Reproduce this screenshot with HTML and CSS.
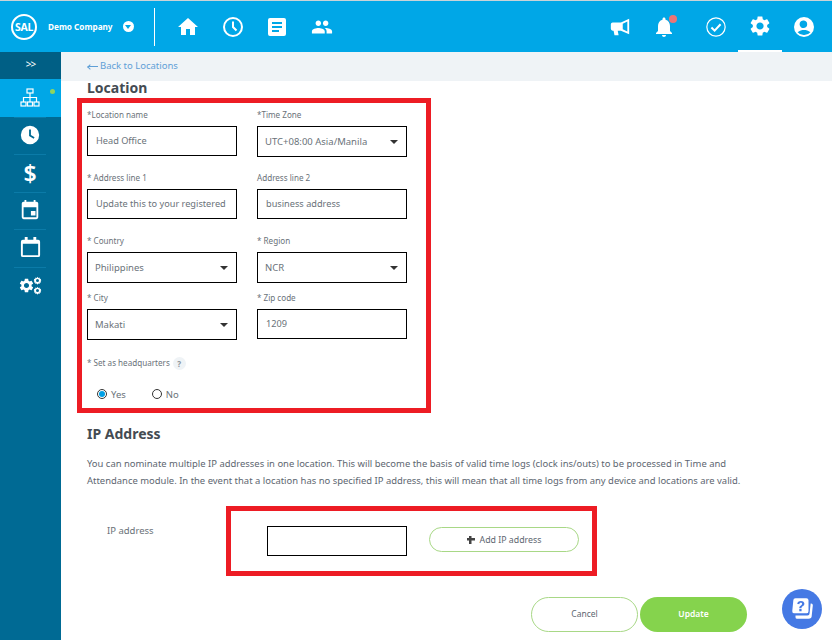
FILE: index.html
```html
<!DOCTYPE html>
<html lang="en">
<head>
  <meta charset="UTF-8">
  <title>Location</title>
  <link rel="stylesheet" href="styles.css">
</head>
<body>
  <header class="topbar">
    <div class="brand">
      <span class="logo">SAL</span>
      <span class="company">Demo Company</span>
      <span class="company-caret"></span>
    </div>
    <nav class="top-nav">
      <a class="top-icon"><svg viewBox="0 0 24 24" width="24" height="24"><path d="M10 20v-6h4v6h5v-8h3L12 3 2 12h3v8z"/></svg></a>
      <a class="top-icon"><svg viewBox="0 0 24 24" width="24" height="24" class="line"><circle cx="12" cy="12" r="9"/><path d="M12 6.5V12l3.5 3.5"/></svg></a>
      <a class="top-icon"><svg viewBox="0 0 24 24" width="24" height="24"><path fill-rule="evenodd" d="M5 3h14a2 2 0 0 1 2 2v14a2 2 0 0 1-2 2H5a2 2 0 0 1-2-2V5a2 2 0 0 1 2-2zm2 4v2h10V7zm0 4v2h10v-2zm0 4v2h7v-2z"/></svg></a>
      <a class="top-icon"><svg viewBox="0 0 24 24" width="22" height="22"><path d="M16 11c1.66 0 2.99-1.34 2.99-3S17.66 5 16 5c-1.66 0-3 1.34-3 3s1.34 3 3 3zm-8 0c1.66 0 2.99-1.34 2.99-3S9.66 5 8 5C6.34 5 5 6.34 5 8s1.34 3 3 3zm0 2c-2.33 0-7 1.17-7 3.5V19h14v-2.5c0-2.33-4.67-3.5-7-3.5zm8 0c-.29 0-.62.02-.97.05 1.16.84 1.97 1.97 1.97 3.45V19h6v-2.5c0-2.33-4.67-3.5-7-3.5z"/></svg></a>
    </nav>
    <nav class="top-right">
      <a class="right-icon"><svg viewBox="0 0 24 24" width="22" height="22"><path fill-rule="evenodd" d="M22 3v17l-9-4H9.500l1 5H6l-1-5H4a2 2 0 0 1-2-2V9a2 2 0 0 1 2-2h9zm-2 3-5 2.500v6l5 2.500z"/></svg></a>
      <a class="right-icon bell"><svg viewBox="0 0 24 24" width="24" height="24"><path d="M12 22c1.1 0 2-.9 2-2h-4c0 1.1.9 2 2 2zm6-6v-5c0-3.07-1.63-5.64-4.5-6.32V4c0-.83-.67-1.5-1.5-1.5s-1.5.67-1.5 1.5v.68C7.64 5.36 6 7.92 6 11v5l-2 2v1h16v-1l-2-2z"/></svg><span class="bell-dot"></span></a>
      <a class="right-icon"><svg viewBox="0 0 24 24" width="22" height="22" class="line thin"><circle cx="12" cy="12" r="10"/><path class="tick" d="M7 12.500l3.500 3.500L17 9"/></svg></a>
      <a class="right-icon gear"><svg viewBox="0 0 24 24" width="24" height="24"><path d="M19.14 12.94c.04-.3.06-.61.06-.94 0-.32-.02-.64-.07-.94l2.03-1.58c.18-.14.23-.41.12-.61l-1.92-3.32c-.12-.22-.37-.29-.59-.22l-2.39.96c-.5-.38-1.03-.7-1.62-.94l-.36-2.54c-.04-.24-.24-.41-.48-.41h-3.84c-.24 0-.43.17-.47.41l-.36 2.54c-.59.24-1.13.57-1.62.94l-2.39-.96c-.22-.08-.47 0-.59.22L2.74 8.87c-.12.21-.08.47.12.61l2.03 1.58c-.05.3-.09.63-.09.94s.02.64.07.94l-2.03 1.58c-.18.14-.23.41-.12.61l1.92 3.32c.12.22.37.29.59.22l2.39-.96c.5.38 1.03.7 1.62.94l.36 2.54c.05.24.24.41.48.41h3.84c.24 0 .44-.17.47-.41l.36-2.54c.59-.24 1.13-.56 1.62-.94l2.39.96c.22.08.47 0 .59-.22l1.92-3.32c.12-.22.07-.47-.12-.61l-2.01-1.58zM12 15.6c-1.98 0-3.6-1.62-3.6-3.6s1.62-3.6 3.6-3.6 3.6 1.62 3.6 3.6-1.62 3.6-3.6 3.6z"/></svg></a>
      <a class="right-icon"><svg viewBox="0 0 24 24" width="24" height="24"><path fill-rule="evenodd" d="M12 2a10 10 0 1 1 0 20 10 10 0 0 1 0-20zm0 3.500A3.800 3.800 0 1 0 12 13a3.800 3.800 0 0 0 0-7.500zM5.600 17.200A8 8 0 0 0 12 20a8 8 0 0 0 6.400-2.800C16.500 15.500 14 15 12 15s-4.500.5-6.400 2.200z"/></svg></a>
    </nav>
  </header>

  <div class="layout">
    <aside class="sidebar">
      <div class="side-toggle">&gt;&gt;</div>
      <a class="side-item active">
        <svg viewBox="0 0 20 20" width="20" height="20" class="org"><rect x="7" y="1" width="6" height="4"/><rect x="1" y="14" width="5" height="4"/><rect x="7.500" y="14" width="5" height="4"/><rect x="14" y="14" width="5" height="4"/><path d="M10 5v9M3.500 14v-4.500h13V14"/></svg>
        <span class="side-dot"></span>
      </a>
      <a class="side-item"><svg viewBox="0 0 24 24" width="22" height="22"><path fill-rule="evenodd" d="M12 2a10 10 0 1 1 0 20 10 10 0 0 1 0-20zm-1 4v7l5 3 1-1.600-4-2.400V6z"/></svg></a>
      <a class="side-item dollar">$</a>
      <a class="side-item"><svg viewBox="0 0 24 24" width="22" height="22"><path fill-rule="evenodd" d="M6 1h2v2h8V1h2v2h1a2 2 0 0 1 2 2v15a2 2 0 0 1-2 2H5a2 2 0 0 1-2-2V5a2 2 0 0 1 2-2h1zM5 9v11h14V9zm8 4h5v5h-5z"/></svg></a>
      <a class="side-item"><svg viewBox="0 0 24 24" width="23" height="23"><path fill-rule="evenodd" d="M6 1h3v3h6V1h3v3h2a2 2 0 0 1 2 2v14a2 2 0 0 1-2 2H4a2 2 0 0 1-2-2V6a2 2 0 0 1 2-2h2zM4 8v12h16V8z"/></svg></a>
      <a class="side-item">
        <svg viewBox="0 0 24 24" width="17" height="17"><path d="M19.14 12.94c.04-.3.06-.61.06-.94 0-.32-.02-.64-.07-.94l2.03-1.58c.18-.14.23-.41.12-.61l-1.92-3.32c-.12-.22-.37-.29-.59-.22l-2.39.96c-.5-.38-1.03-.7-1.62-.94l-.36-2.54c-.04-.24-.24-.41-.48-.41h-3.84c-.24 0-.43.17-.47.41l-.36 2.54c-.59.24-1.13.57-1.62.94l-2.39-.96c-.22-.08-.47 0-.59.22L2.74 8.87c-.12.21-.08.47.12.61l2.03 1.58c-.05.3-.09.63-.09.94s.02.64.07.94l-2.03 1.58c-.18.14-.23.41-.12.61l1.92 3.32c.12.22.37.29.59.22l2.39-.96c.5.38 1.03.7 1.62.94l.36 2.54c.05.24.24.41.48.41h3.84c.24 0 .44-.17.47-.41l.36-2.54c.59-.24 1.13-.56 1.62-.94l2.39.96c.22.08.47 0 .59-.22l1.92-3.32c.12-.22.07-.47-.12-.61l-2.01-1.58zM12 15.6c-1.98 0-3.6-1.62-3.6-3.6s1.62-3.6 3.6-3.6 3.6 1.62 3.6 3.6-1.62 3.6-3.6 3.6z"/></svg>
        <span class="gear-small">
          <svg viewBox="0 0 24 24" width="9" height="9"><path d="M12 2l2 3 3.500-1 .5 3.500 3.500.5-1 3.500 2 1-2 1 1 3.500-3.500.5-.5 3.500-3.500-1-2 3-2-3-3.500 1-.5-3.500-3.500-.5 1-3.500-2-1 2-1-1-3.500 3.500-.5.5-3.500 3.500 1zm0 6a4 4 0 1 0 0 8 4 4 0 0 0 0-8z" fill-rule="evenodd"/></svg>
          <svg viewBox="0 0 24 24" width="9" height="9"><path d="M12 2l2 3 3.500-1 .5 3.500 3.500.5-1 3.500 2 1-2 1 1 3.500-3.500.5-.5 3.500-3.500-1-2 3-2-3-3.500 1-.5-3.500-3.500-.5 1-3.500-2-1 2-1-1-3.500 3.500-.5.5-3.500 3.500 1zm0 6a4 4 0 1 0 0 8 4 4 0 0 0 0-8z" fill-rule="evenodd"/></svg>
        </span>
      </a>
    </aside>

    <main class="main">
      <div class="crumb"><a class="back-link"><span class="back-arrow"></span>Back to Locations</a></div>
      <div class="content">
        <h2 class="section-title">Location</h2>

        <section class="highlight location-box">
          <div class="form-grid">
            <div class="field">
              <label>*Location name</label>
              <div class="control">Head Office</div>
            </div>
            <div class="field">
              <label>*Time Zone</label>
              <div class="control select">UTC+08:00 Asia/Manila</div>
            </div>
            <div class="field">
              <label>* Address line 1</label>
              <div class="control">Update this to your registered</div>
            </div>
            <div class="field">
              <label>Address line 2</label>
              <div class="control">business address</div>
            </div>
            <div class="field tight">
              <label>* Country</label>
              <div class="control select">Philippines</div>
            </div>
            <div class="field tight">
              <label>* Region</label>
              <div class="control select">NCR</div>
            </div>
            <div class="field">
              <label>* City</label>
              <div class="control select">Makati</div>
            </div>
            <div class="field">
              <label>* Zip code</label>
              <div class="control">1209</div>
            </div>
          </div>
          <div class="hq-label">* Set as headquarters <span class="help-dot">?</span></div>
          <div class="radio-row">
            <span class="radio checked"></span><span class="radio-text yes">Yes</span>
            <span class="radio"></span><span class="radio-text">No</span>
          </div>
        </section>

        <h2 class="section-title ip-title">IP Address</h2>
        <p class="ip-note">You can nominate multiple IP addresses in one location. This will become the basis of valid time logs (clock ins/outs) to be processed in Time and Attendance module. In the event that a location has no specified IP address, this will mean that all time logs from any device and locations are valid.</p>

        <div class="ip-row">
          <span class="ip-label">IP address</span>
          <div class="highlight ip-box">
            <div class="control ip-input"></div>
            <button class="btn-add"><span class="plus"></span>Add IP address</button>
          </div>
        </div>

        <div class="actions">
          <button class="btn-cancel">Cancel</button>
          <button class="btn-update">Update</button>
        </div>
      </div>
    </main>
  </div>

  <a class="help-fab">
    <svg viewBox="0 0 24 24" width="26" height="26"><path fill-rule="evenodd" d="M6 2h10a2 2 0 0 1 2 2v10a2 2 0 0 1-2 2H5a2 2 0 0 1-2-2l1-10a2 2 0 0 1 2-2zm5 2.500c-2 0-3.200 1-3.500 2.700l2 .3c.2-.8.7-1.200 1.400-1.200.8 0 1.200.4 1.200 1 0 1.300-2.600 1.400-2.600 3.900h2c0-1.700 2.700-1.900 2.700-4 0-1.700-1.200-2.700-3.200-2.700zM9.500 12v2h2.100v-2z"/><path d="M20 7h.5A1.500 1.500 0 0 1 22 8.500L21 18a3 3 0 0 1-3 3H7.500A1.500 1.500 0 0 1 6 19.500V18h11a2 2 0 0 0 2-2z"/></svg>
  </a>
</body>
</html>
```

FILE: styles.css
```css
* {
  box-sizing: border-box;
}
html, body {
  height: 640px;
  overflow: hidden;
}
body {
  margin: 0;
  font-family: "Noto Sans", "Open Sans", Arial, sans-serif;
  color: #5d6670;
  background: #fff;
}
svg {
  fill: #fff;
  display: block;
}
svg.line {
  fill: none;
  stroke: #fff;
  stroke-width: 2;
}
svg.line.thin {
  stroke-width: 1.300;
}
svg.line .tick {
  stroke-width: 2.200;
}

/* top bar */
.topbar {
  display: flex;
  align-items: center;
  height: 52px;
  background: #00a7e7;
  border-top: 1px solid #c9d3d8;
}
.brand {
  display: flex;
  align-items: center;
  width: 155px;
  height: 38px;
  padding-left: 11px;
  border-right: 1px solid #fff;
}
.logo {
  display: flex;
  align-items: center;
  justify-content: center;
  width: 26px;
  height: 26px;
  border: 2px solid #fff;
  border-radius: 50%;
  color: #fff;
  font-size: 10.500px;
  font-weight: 700;
  letter-spacing: -0.3px;
}
.company {
  margin-left: 11px;
  color: #fff;
  font-size: 8.200px;
  font-weight: 700;
  white-space: nowrap;
}
.company-caret {
  position: relative;
  width: 11px;
  height: 11px;
  margin-left: 10px;
  border-radius: 50%;
  background: #fff;
}
.company-caret::after {
  content: "";
  position: absolute;
  left: 2px;
  top: 4px;
  border: 3.500px solid transparent;
  border-top: 4px solid #00a7e7;
  border-bottom: 0;
}
.top-nav {
  display: flex;
  align-items: center;
  margin-left: 11px;
}
.top-icon {
  display: flex;
  justify-content: center;
  width: 44.500px;
}
.top-right {
  display: flex;
  align-items: stretch;
  height: 51px;
  margin-left: auto;
  padding-right: 6px;
}
.right-icon {
  position: relative;
  display: flex;
  align-items: center;
  justify-content: center;
  width: 44px;
}
.bell {
  margin-right: 8px;
}
.bell-dot {
  position: absolute;
  top: 14px;
  left: 27px;
  width: 8px;
  height: 8px;
  border-radius: 50%;
  background: #ec7576;
}
.gear {
  border-bottom: 2px solid #fff;
}

/* sidebar */
.layout {
  display: flex;
  height: 588px;
}
.sidebar {
  flex: none;
  width: 61px;
  background: #006a94;
  color: #fff;
}
.side-toggle {
  height: 27px;
  background: #005f85;
  color: #fff;
  font-size: 10px;
  letter-spacing: -1px;
  line-height: 25px;
  text-align: center;
}
.side-item {
  position: relative;
  display: flex;
  align-items: center;
  justify-content: center;
  height: 37.500px;
  padding-right: 1px;
}
.side-item + .side-item::before {
  content: "";
  position: absolute;
  top: 0;
  left: 14px;
  width: 32px;
  height: 1px;
  background: #0b7ba8;
}
.side-item.active {
  background: #00a7e7;
}
.side-dot {
  position: absolute;
  top: 10px;
  left: 50px;
  width: 5px;
  height: 5px;
  border-radius: 50%;
  background: #8fd45f;
}
svg.org {
  fill: none;
  stroke: #fff;
  stroke-width: 1.200;
}
.dollar {
  font-size: 23px;
  font-weight: 600;
  color: #fff;
}
.gear-small {
  display: flex;
  flex-direction: column;
  gap: 1px;
  margin-left: -2px;
}

/* content */
.main {
  flex: 1;
  min-width: 0;
}
.crumb {
  height: 29px;
  padding-left: 27px;
  background: #eff3f6;
}
.back-link {
  color: #5f9fd6;
  font-size: 9.500px;
  line-height: 27px;
}
.back-arrow {
  display: inline-block;
  position: relative;
  width: 10px;
  height: 1px;
  margin-right: 2px;
  vertical-align: middle;
  background: #5f9fd6;
}
.back-arrow::before {
  content: "";
  position: absolute;
  left: 0;
  top: -1px;
  width: 3px;
  height: 3px;
  border-left: 1px solid #5f9fd6;
  border-bottom: 1px solid #5f9fd6;
  transform: rotate(45deg);
}
.content {
  padding-left: 26px;
}
.section-title {
  margin: -1px 0 0;
  color: #444b52;
  font-size: 14px;
  font-weight: 700;
  line-height: 15px;
}
.highlight {
  border: 5px solid #ed1c24;
}
.location-box {
  width: 354px;
  height: 315px;
  margin: 3px 0 0 -10px;
  padding: 9px 0 0 5px;
}
.form-grid {
  display: grid;
  grid-template-columns: 150px 150px;
  column-gap: 20px;
}
.field {
  height: 63px;
}
.field.tight {
  height: 57px;
}
.field label {
  display: block;
  height: 14px;
  font-size: 8.100px;
  line-height: 6px;
  color: #6a7279;
}
.control {
  display: flex;
  align-items: center;
  height: 30px;
  padding: 0 8px 1px;
  border: 1px solid #000;
  background: #fff;
  color: #6a7279;
  font-size: 9.200px;
  white-space: nowrap;
  overflow: hidden;
}
.control.select {
  position: relative;
  height: 31px;
  padding-left: 7px;
  font-size: 9.500px;
}
.control.select::after {
  content: "";
  position: absolute;
  right: 8px;
  top: 13px;
  border: 4px solid transparent;
  border-top: 4px solid #333;
  border-bottom: 0;
}
.hq-label {
  display: flex;
  align-items: center;
  gap: 3px;
  margin-top: -3px;
  height: 14px;
  font-size: 8.100px;
  color: #6a7279;
}
.help-dot {
  width: 13px;
  height: 13px;
  margin-top: 3px;
  border-radius: 50%;
  background: #eff3f6;
  color: #8a939b;
  font-size: 8px;
  font-weight: 700;
  line-height: 14px;
  text-align: center;
}
.radio-row {
  display: flex;
  align-items: center;
  margin: 18px 0 0 10px;
  height: 14px;
  font-size: 9.500px;
  color: #6a7279;
}
.radio {
  position: relative;
  width: 10px;
  height: 10px;
  margin-right: 4px;
  border: 1px solid #333;
  border-radius: 50%;
}
.radio.checked::after {
  content: "";
  position: absolute;
  left: 1px;
  top: 1px;
  width: 6px;
  height: 6px;
  border-radius: 50%;
  background: #00a0e6;
}
.radio-text.yes {
  margin-right: 26px;
}
.ip-title {
  margin-top: 13px;
}
.ip-note {
  width: 690px;
  margin: 15px 0 0;
  font-size: 9.450px;
  line-height: 16.500px;
  color: #5d6670;
}
.ip-row {
  display: flex;
  align-items: flex-start;
  margin-top: 17px;
}
.ip-label {
  width: 139px;
  padding: 18px 0 0 20px;
  font-size: 9.500px;
  color: #6a7279;
}
.ip-box {
  display: flex;
  align-items: center;
  width: 371px;
  height: 70px;
  padding: 0 0 0 36px;
}
.ip-input {
  flex: none;
  width: 140px;
  height: 30px;
}
.btn-add {
  display: flex;
  align-items: center;
  justify-content: center;
  flex: none;
  width: 150px;
  height: 25px;
  margin: 0 0 3px 22px;
  border: 1px solid #a8d886;
  border-radius: 13px;
  background: #fff;
  color: #5d6670;
  font-family: inherit;
  font-size: 8.800px;
}
.plus {
  position: relative;
  width: 8px;
  height: 8px;
  margin-right: 5px;
  background:
    linear-gradient(#444, #444) center / 100% 2.500px no-repeat,
    linear-gradient(#444, #444) center / 2.500px 100% no-repeat;
}
.actions {
  display: flex;
  gap: 2px;
  margin: 21px 0 0 444px;
}
.actions button {
  width: 107px;
  height: 35px;
  padding-bottom: 3px;
  border-radius: 18px;
  font-family: inherit;
  font-size: 8.500px;
}
.btn-cancel {
  border: 1px solid #a8d886;
  background: #fff;
  color: #5d6670;
}
.btn-update {
  border: 0;
  background: #85d34d;
  color: #fff;
  font-weight: 600;
}

/* floating help button */
.help-fab {
  position: fixed;
  left: 782px;
  top: 589px;
  display: flex;
  align-items: center;
  justify-content: center;
  width: 40px;
  height: 40px;
  border-radius: 50%;
  background: #4579e4;
}
```
